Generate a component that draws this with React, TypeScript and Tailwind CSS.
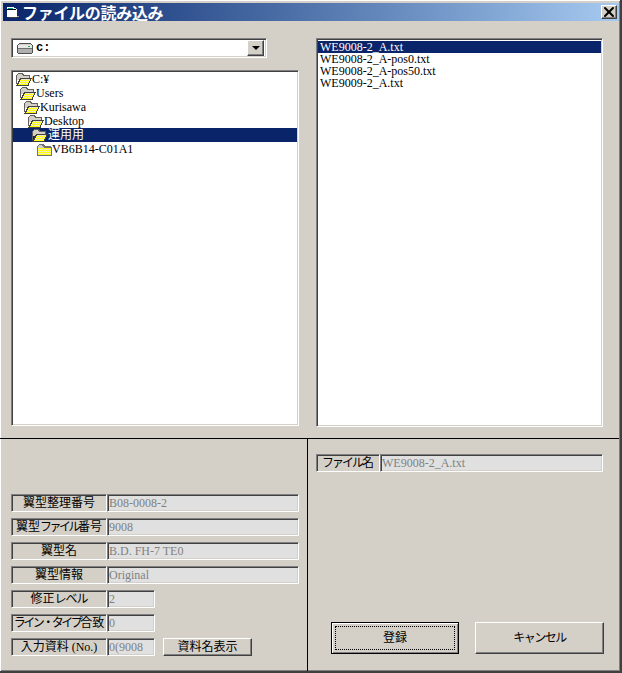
import React from "react";
import { X } from "lucide-react";

const sunken =
  "border border-t-[#808080] border-l-[#808080] border-b-white border-r-white shadow-[inset_1px_1px_0_#404040,inset_-1px_-1px_0_#d4d0c8]";
const raised =
  "border border-t-white border-l-white border-b-[#404040] border-r-[#404040] shadow-[inset_-1px_-1px_0_#808080]";

const Dither = ({ id }: { id: string }) => (
  <defs>
    <pattern id={id} width="2" height="2" patternUnits="userSpaceOnUse">
      <rect width="2" height="2" fill="#ffff00" />
      <rect width="1" height="1" fill="#f0f0c0" />
      <rect x="1" y="1" width="1" height="1" fill="#f0f0c0" />
    </pattern>
  </defs>
);

const FolderOpen = ({ id }: { id: string }) => (
  <svg width="16" height="13" viewBox="0 0 16 13" className="shrink-0" shapeRendering="crispEdges">
    <Dither id={id} />
    <path d="M1 2h1V1h5v1h1v1h5v2h1v2H1z" fill="#d4d0c8" />
    <path d="M0 2h1V1h1V0h5v1h1v1h6v4h-1V3H7V2H6V1H2v1H1v9H0z" fill="#606060" />
    <path d="M4 5h12v1h-1v2h-1v2h-1v2H1v-2h1V8h1V6h1z" fill={`url(#${id})`} />
    <path d="M4 5h12v1h-1v2h-1v2h-1v3H0v-1h1v-2h1V8h1V6h1zM5 6v1H4v2H3v2H2v1h10v-2h1V8h1V6z" fill="#404040" />
  </svg>
);

const FolderClosed = ({ id }: { id: string }) => (
  <svg width="16" height="13" viewBox="0 0 16 13" className="shrink-0" shapeRendering="crispEdges">
    <Dither id={id} />
    <rect x="2" y="4" width="13" height="8" fill={`url(#${id})`} />
    <path d="M2 3h1V2h4v1h1v1h7v1H2z" fill="#d4d0c8" />
    <path d="M1 3h1V2h1V1h5v1h1v1h6v1h1v9H1zM2 4v8h13V5H8V4H7V3H6V2H3v1H2z" fill="#707070" />
  </svg>
);

const DriveIcon = () => (
  <svg width="16" height="11" viewBox="0 0 16 11" className="shrink-0" shapeRendering="crispEdges">
    <path d="M2 0h12v1h1v1h1v8h-1v1H1v-1H0V2h1V1h1z" fill="#505050" />
    <rect x="2" y="1" width="12" height="1" fill="#d4d0c8" />
    <rect x="1" y="2" width="14" height="3" fill="#e8e8e8" />
    <rect x="1" y="5" width="14" height="1" fill="#707070" />
    <rect x="1" y="6" width="14" height="4" fill="#b0b0b0" />
    <rect x="11" y="3" width="2" height="1" fill="#00c040" />
  </svg>
);

const TitleIcon = () => (
  <svg width="16" height="16" viewBox="0 0 16 16" className="shrink-0" shapeRendering="crispEdges">
    <path d="M2 3h7v1h2v1h1v8H2z" fill="#ffffff" />
    <path d="M3 4h5v1H3z" fill="#00a0a0" />
    <path d="M2 5h9v1H2z" fill="#000000" />
    <path d="M12 12h2v1h-2z" fill="#a0a0a0" />
    <path d="M4 13h8v1H4z" fill="#404040" />
  </svg>
);

const tree = [
  { name: "C:¥", indent: 3, open: true },
  { name: "Users", indent: 7, open: true },
  { name: "Kurisawa", indent: 11, open: true },
  { name: "Desktop", indent: 15, open: true },
  { name: "運用用", indent: 19, open: true, selected: true },
  { name: "VB6B14-C01A1", indent: 23, open: false },
];

const files = ["WE9008-2_A.txt", "WE9008-2_A-pos0.txt", "WE9008-2_A-pos50.txt", "WE9009-2_A.txt"];

const Row = ({
  label,
  value,
  short,
  children,
}: {
  label: React.ReactNode;
  value: string;
  short?: boolean;
  children?: React.ReactNode;
}) => (
  <div className="flex h-[18px]">
    <div className={`${sunken} flex w-[96px] items-center justify-center overflow-hidden whitespace-nowrap text-[12px] leading-none text-black`}>
      <span>{label}</span>
    </div>
    <div className={`${sunken} ${short ? "w-[48px]" : "w-[192px]"} overflow-hidden whitespace-nowrap bg-[#e0e0e0] pl-[1px] text-[12px] leading-[16px] text-[#808080]`}>
      {value}
    </div>
    {children}
  </div>
);

export default function App() {
  return (
    <div className="relative h-[673px] w-[622px] overflow-hidden border-r-2 border-b-2 border-r-[#404040] border-b-[#404040] bg-[#d4d0c8] pt-[3px] pl-[3px] [font-family:'Liberation_Serif','Noto_Sans_CJK_JP',serif] shadow-[inset_1px_1px_0_#ffffff,inset_-1px_-1px_0_#808080]">
      <div className="flex h-[18px] w-[616px] items-center justify-between bg-gradient-to-r from-[#0a246a] to-[#a6caf0] pr-[2px] pl-[2px]">
        <div className="flex items-center gap-px">
          <TitleIcon />
          <span className="text-[16px] leading-[18px] font-bold tracking-[-0.3px] whitespace-nowrap text-white [font-family:'Noto_Sans_CJK_JP',sans-serif]">
            ファイルの読み込み
          </span>
        </div>
        <button className={`${raised} flex h-[14px] w-[16px] items-center justify-center overflow-hidden bg-[#d4d0c8]`}>
          <X size={16} strokeWidth={3} color="#000000" className="shrink-0" />
        </button>
      </div>

      {/* top panes */}
      <div className="flex h-[417px] w-[616px] pt-[17px] pl-[8px]">
        <div className="flex w-[288px] flex-col gap-[12px]">
          <div className={`${sunken} flex h-[20px] w-[256px] items-center justify-between bg-white pr-[2px] pl-[5px]`}>
            <div className="flex items-center gap-[3px]">
              <DriveIcon />
              <span className="text-[12px] font-bold [font-family:'Liberation_Mono',monospace]">c:</span>
            </div>
            <div className={`${raised} flex h-[16px] w-[17px] items-center justify-center bg-[#d4d0c8]`}>
              <div className="h-0 w-0 border-t-[4px] border-r-[4px] border-l-[4px] border-t-black border-r-transparent border-l-transparent" />
            </div>
          </div>
          <div className={`${sunken} h-[356px] w-[288px] bg-white p-[1px]`}>
            {tree.map((t, i) => (
              <div
                key={t.name}
                className={`flex h-[14px] items-center text-[12px] leading-none whitespace-nowrap ${t.selected ? "bg-[#0a246a] text-white" : "text-black"}`}
              >
                <div className="flex" style={{ paddingLeft: t.indent }}>
                  {t.open ? <FolderOpen id={`fo${i}`} /> : <FolderClosed id={`fc${i}`} />}
                </div>
                <span>{t.name}</span>
              </div>
            ))}
          </div>
        </div>
        <div className={`${sunken} ml-[17px] h-[389px] w-[287px] bg-white p-[1px] pt-[2px]`}>
          {files.map((f, i) => (
            <div
              key={f}
              className={`h-[12px] pl-[2px] text-[12px] leading-[12px] whitespace-nowrap ${i === 0 ? "bg-[#0a246a] text-white" : "text-black"}`}
            >
              {f}
            </div>
          ))}
        </div>
      </div>

      {/* bottom panes */}
      <div className="-ml-[3px] flex h-[233px] w-[619px] border-t border-black">
        <div className="flex w-[308px] flex-col gap-[6px] border-r border-black pt-[55px] pl-[11px]">
          <Row label="翼型整理番号" value="B08-0008-2" />
          <Row label={<>翼型<span className="tracking-[-2.5px]">ファイル</span>番号</>} value="9008" />
          <Row label="翼型名" value="B.D. FH-7 TE0" />
          <Row label="翼型情報" value="Original" />
          <Row label={<>修正<span className="tracking-[-1px]">レベル</span></>} value="2" short />
          <Row label={<><span className="tracking-[-2.5px]">ライン・タイプ</span>合致</>} value="0" short />
          <Row label="入力資料 (No.)" value="0(9008" short>
            <button className={`${raised} ml-[8px] h-[18px] w-[89px] bg-[#d4d0c8] text-[12px] leading-none`}>資料名表示</button>
          </Row>
        </div>
        <div className="flex flex-1 flex-col pt-[15px] pl-[8px]">
          <div className="flex h-[18px]">
            <div className={`${sunken} flex w-[64px] items-center justify-center text-[12px] leading-none whitespace-nowrap`}>
              <span><span className="tracking-[-2px]">ファイル</span>名</span>
            </div>
            <div className={`${sunken} w-[223px] bg-[#e0e0e0] pl-[1px] text-[12px] leading-[16px] text-[#808080]`}>WE9008-2_A.txt</div>
          </div>
          <div className="mt-[150px] ml-[15px] flex gap-[16px]">
            <button className="flex h-[32px] w-[128px] items-center justify-center border border-black bg-[#d4d0c8] text-[12px] shadow-[inset_1px_1px_0_#ffffff,inset_-1px_-1px_0_#808080]">
              <span className="flex h-[24px] w-[120px] items-center justify-center border border-dotted border-black">登録</span>
            </button>
            <button className={`${raised} h-[32px] w-[129px] bg-[#d4d0c8] text-[12px] tracking-[-1.5px]`}>キャンセル</button>
          </div>
        </div>
      </div>
    </div>
  );
}
